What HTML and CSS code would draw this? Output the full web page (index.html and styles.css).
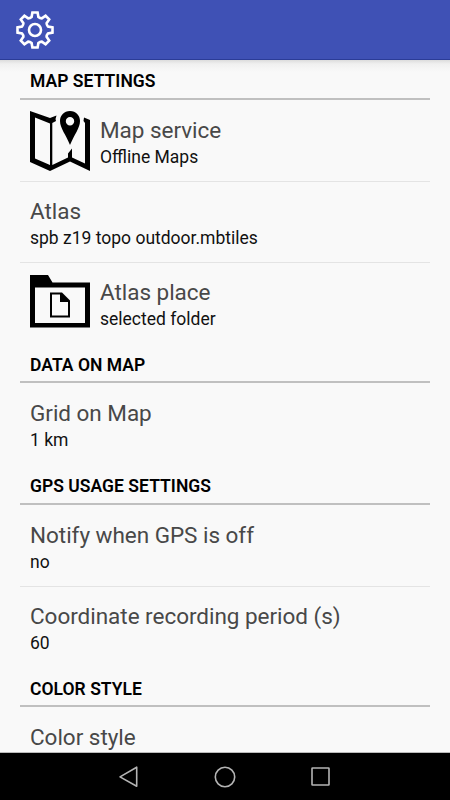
FILE: index.html
```html
<!DOCTYPE html>
<html lang="en">
<head>
    <meta charset="UTF-8">
    <meta name="viewport" content="width=device-width, initial-scale=1.0">
    <title>Settings</title>
    <link rel="stylesheet" href="styles.css">
</head>
<body>
    <header class="toolbar">
        <svg class="gear" viewBox="-20 -20 40 40">
            <path d="M-2.6 -17.5H2.6L3.4 -13Q5 -11.6 6.8 -11.6L10.6 -14.2L14.2 -10.6L11.6 -6.8Q11.6 -5 13 -3.4L17.5 -2.6V2.6L13 3.4Q11.6 5 11.6 6.8L14.2 10.6L10.6 14.2L6.8 11.6Q5 11.6 3.4 13L2.6 17.5H-2.6L-3.4 13Q-5 11.6 -6.8 11.6L-10.6 14.2L-14.2 10.6L-11.6 6.8Q-11.6 5 -13 3.4L-17.5 2.6V-2.6L-13 -3.4Q-11.6 -5 -11.6 -6.8L-14.2 -10.6L-10.6 -14.2L-6.8 -11.6Q-5 -11.6 -3.4 -13Z"/>
            <circle r="6"/>
        </svg>
    </header>
    <main class="settings">
        <h2>MAP SETTINGS</h2>
        <div class="item">
            <svg class="icon" viewBox="0 0 60 60">
                <path fill-rule="evenodd" d="M0 0L20 7L26.500 4.500Q25 8 26 10L22.300 12V54L38 46.500V42.500L42 37.500V46.500L55 52.500V12L53.500 10L54 6.500L60 9V60L40 50.500L20 60L0 51ZM5 6.500V47.500L20 54V12.500Z"/>
                <path fill-rule="evenodd" d="M40 0C46 0 50 4.500 50 10C50 17 44 24 40 34C36 24 30 17 30 10C30 4.500 34 0 40 0ZM40 6A4.200 4.200 0 1 0 40 14.400A4.200 4.200 0 1 0 40 6Z"/>
            </svg>
            <div class="text">
                <div class="title">Map service</div>
                <div class="value">Offline Maps</div>
            </div>
        </div>
        <div class="item">
            <div class="text">
                <div class="title">Atlas</div>
                <div class="value">spb z19 topo outdoor.mbtiles</div>
            </div>
        </div>
        <div class="item">
            <svg class="icon" viewBox="0 0 60 60">
                <path fill-rule="evenodd" d="M0 2H18L22.500 9.500H60V54.500H0ZM5 14.500V50H55V14.500Z"/>
                <path fill-rule="evenodd" d="M20 19.500H32L40 27.500V44.500H20ZM22 21.500V42.500H38V29H30V21.500Z"/>
            </svg>
            <div class="text">
                <div class="title">Atlas place</div>
                <div class="value">selected folder</div>
            </div>
        </div>
        <h2>DATA ON MAP</h2>
        <div class="item">
            <div class="text">
                <div class="title">Grid on Map</div>
                <div class="value">1 km</div>
            </div>
        </div>
        <h2>GPS USAGE SETTINGS</h2>
        <div class="item">
            <div class="text">
                <div class="title">Notify when GPS is off</div>
                <div class="value">no</div>
            </div>
        </div>
        <div class="item">
            <div class="text">
                <div class="title">Coordinate recording period (s)</div>
                <div class="value">60</div>
            </div>
        </div>
        <h2>COLOR STYLE</h2>
        <div class="item last">
            <div class="title">Color style</div>
        </div>
    </main>
    <nav class="navbar">
        <svg viewBox="0 0 24 24"><path d="M19.700 2.200V21.300L3 11.900Z"/></svg>
        <svg viewBox="0 0 24 24"><circle cx="12" cy="12" r="9.700"/></svg>
        <svg viewBox="0 0 24 24"><rect x="3" y="3" width="17" height="17" rx="0.500"/></svg>
    </nav>
</body>
</html>
```

FILE: styles.css
```css
* {
    box-sizing: border-box;
}
body {
    display: flex;
    flex-direction: column;
    height: 800px;
    margin: 0;
    overflow: hidden;
    font-family: Roboto, sans-serif;
    background-color: #f9f9f9;
}
.toolbar {
    display: flex;
    align-items: center;
    flex: none;
    height: 60px;
    padding-left: 15px;
    background-color: #3f51b5;
    border-bottom: 1px solid #2b3c97;
}
.gear {
    width: 40px;
    height: 40px;
    fill: none;
    stroke: #fff;
    stroke-width: 2.6;
}
.settings {
    flex: 1;
    min-height: 0;
    overflow: hidden;
    padding: 0 20px;
    background: linear-gradient(#dcdcdc, #f0f0f0 4px, #f9f9f9 12px) no-repeat;
    border-bottom: 1px solid #bbb;
}
h2 {
    height: 40.5px;
    margin: 0;
    padding: 0 10px;
    border-bottom: 2.5px solid #c0c0c0;
    font-size: 17.5px;
    font-weight: 600;
    letter-spacing: 0.03px;
    line-height: 44px;
    color: #000;
}
h2:first-child {
    height: 39.5px;
    line-height: 42px;
}
.item {
    display: flex;
    align-items: center;
    height: 81px;
    padding: 0 10px;
}
.item + .item {
    border-top: 1px solid #e4e4e4;
}
.item.last {
    align-items: flex-start;
    height: 46px;
    padding-top: 16px;
}
.icon {
    width: 60px;
    height: 60px;
    margin-right: 10px;
    overflow: visible;
}
h2:first-child + .item .icon {
    margin-top: 2px;
}
.text {
    padding-top: 5px;
}
.title {
    font-size: 22.5px;
    letter-spacing: -0.03px;
    line-height: 28px;
    color: #484848;
}
.value {
    font-size: 17.5px;
    line-height: 26px;
    color: #111;
}
.navbar {
    display: flex;
    justify-content: center;
    align-items: center;
    flex: none;
    gap: 72px;
    height: 47px;
    background-color: #000;
}
.navbar svg {
    width: 24px;
    height: 24px;
    fill: none;
    stroke: #b4b4b4;
    stroke-width: 1.6;
    stroke-linejoin: round;
}
```
